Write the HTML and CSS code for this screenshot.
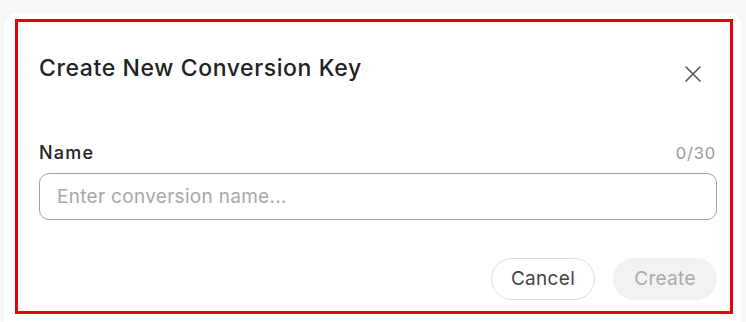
FILE: index.html
```html
<!doctype html>
<html lang="en">
<head>
	<meta charset="UTF-8" />
	<title>Create New Conversion Key</title>
<link rel="stylesheet" href="styles.css">
</head>
<body>
	<section class="card">
		<div class="dialog">
			<header class="dialog-head">
				<h2>Create New Conversion Key</h2>
				<a href="javascript:;" class="close">
					<svg width="18" height="18" viewBox="0 0 18 18"><path d="M2 2L16 16M16 2L2 16" stroke="#555" stroke-width="1.6" stroke-linecap="round"/></svg>
				</a>
			</header>
			<div class="field">
				<div class="field-top">
					<label for="name">Name</label>
					<span class="count">0/30</span>
				</div>
				<input type="text" id="name" placeholder="Enter conversion name..." />
			</div>
			<footer class="actions">
				<a href="javascript:;" class="btn cancel">Cancel</a>
				<a href="javascript:;" class="btn create">Create</a>
			</footer>
		</div>
	</section>
</body>
</html>
```

FILE: styles.css
```css
*{
	margin: 0;
	padding: 0;
	box-sizing: border-box;
}
body{
	background: #f7f7f7;
	font-family: Inter, "Noto Sans", sans-serif;
	color: #222;
	overflow: hidden;
}
.card{
	margin: 13px 4px 0 4px;
	height: 320px;
	background: #fff;
	border-radius: 14px;
	padding: 6px 9px 0 11px;
}
.dialog{
	border: 3px solid #e8000b;
	height: 295px;
	padding: 32px 13px 0 21px;
}
.dialog-head{
	display: flex;
	justify-content: space-between;
	align-items: center;
	height: 28px;
}
.dialog-head h2{
	font-size: 23px;
	font-weight: 500;
	line-height: 28px;
	letter-spacing: 0.6px;
	color: #222;
}
.close{
	display: flex;
	margin: 11px 15px 0 0;
}
.field{
	margin-top: 60px;
}
.field-top{
	display: flex;
	justify-content: space-between;
	align-items: baseline;
	height: 24px;
	margin-bottom: 7px;
}
.field-top label{
	font-size: 18px;
	font-weight: 500;
	letter-spacing: 1.2px;
	color: #222;
}
.count{
	font-size: 16.5px;
	letter-spacing: 0.8px;
	color: #999;
	margin-right: 1px;
}
.field input{
	display: block;
	width: 678px;
	height: 47px;
	border: 1px solid #a3a3a3;
	border-radius: 10px;
	padding: 0 17px;
	font-family: inherit;
	font-size: 19px;
	letter-spacing: 0.3px;
	outline: none;
}
.field input::placeholder{
	color: #a8a8a8;
}
.actions{
	display: flex;
	justify-content: flex-end;
	gap: 18px;
	margin-top: 38px;
}
.btn{
	display: inline-block;
	width: 104px;
	height: 42px;
	line-height: 40px;
	text-align: center;
	border-radius: 21px;
	font-size: 19px;
	letter-spacing: 0.3px;
	text-decoration: none;
	border: 1px solid #dedede;
	color: #444;
}
.btn.create{
	background: #f2f2f2;
	border-color: #f2f2f2;
	color: #aaa;
}
```
